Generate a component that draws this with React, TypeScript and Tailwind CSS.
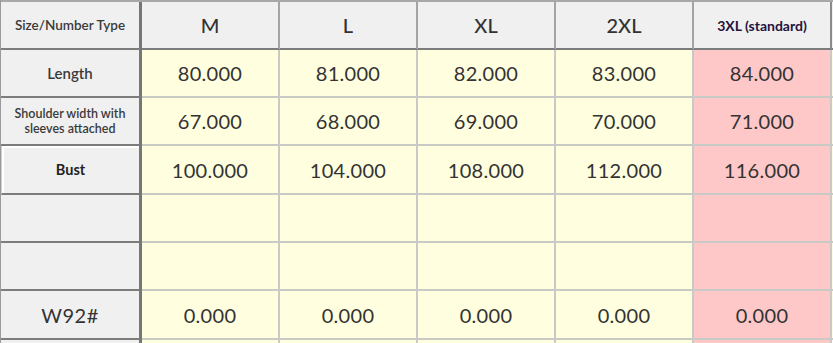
const sizes = ["M", "L", "XL", "2XL"];

const rows: { label: string; kind: "plain" | "small" | "bust" | "big" | "empty"; values: string[] }[] = [
  { label: "Length", kind: "plain", values: ["80.000", "81.000", "82.000", "83.000", "84.000"] },
  { label: "Shoulder width with sleeves attached", kind: "small", values: ["67.000", "68.000", "69.000", "70.000", "71.000"] },
  { label: "Bust", kind: "bust", values: ["100.000", "104.000", "108.000", "112.000", "116.000"] },
  { label: "", kind: "empty", values: ["", "", "", "", ""] },
  { label: "", kind: "empty", values: ["", "", "", "", ""] },
  { label: "W92#", kind: "big", values: ["0.000", "0.000", "0.000", "0.000", "0.000"] },
];

const heights = ["h-[48px]", "h-[48px]", "h-[49px]", "h-[48px]", "h-[48px]", "h-[49px]"];

function RowHead({ label, kind }: { label: string; kind: string }) {
  let cls = "text-[15px] font-semibold text-[#3a3a3a]";
  if (kind === "small") cls = "text-[12.5px] leading-[15px] font-semibold text-[#3a3a3a] px-1";
  if (kind === "bust") cls = "text-[14.5px] font-bold text-[#222]";
  if (kind === "big") cls = "text-[20px] tracking-[0.5px] text-[#333]";
  return (
    <div
      className={
        "w-[141px] shrink-0 flex items-center justify-center text-center bg-[#f0f0f0] border-r-[3px] border-b-2 border-r-[#767676] border-b-[#7c7c7c] " +
        (kind === "bust" ? "shadow-[inset_2px_2px_0_#ffffff] border-l border-l-[#d0d0d0]" : "")
      }
    >
      <span className={cls}>{label}</span>
    </div>
  );
}

export default function App() {
  return (
    <div className="w-[833px] h-[343px] overflow-hidden bg-white font-['Lato','Noto_Sans',sans-serif]">
      <div className="flex flex-col w-max border-l border-l-[#9a9a9a]">
        <div className="flex h-[50px] border-t-2 border-t-[#a8a8a8]">
          <div className="w-[141px] shrink-0 flex items-center justify-center bg-[#f0f0f0] border-r-[3px] border-b-2 border-r-[#767676] border-b-[#7c7c7c]">
            <span className="text-[13.5px] font-semibold text-[#3a3a3a]">Size/Number Type</span>
          </div>
          {sizes.map((s) => (
            <div
              key={s}
              className="w-[138px] shrink-0 flex items-center justify-center bg-[#f0f0f0] border-r-2 border-b-2 border-r-[#a4a4a4] border-b-[#7c7c7c]"
            >
              <span className="text-[20px] font-medium text-[#333]">{s}</span>
            </div>
          ))}
          <div className="w-[138px] shrink-0 flex items-center justify-center bg-[#f0f0f0] border-r-2 border-b-2 border-r-[#8a8a8a] border-b-[#7c7c7c]">
            <span className="text-[14px] font-bold text-[#24123f]">3XL (standard)</span>
          </div>
          <div className="w-[60px] shrink-0 bg-[#f0f0f0] border-b-2 border-b-[#7c7c7c]" />
        </div>
        {rows.map((r, i) => (
          <div key={i} className={"flex " + heights[i]}>
            <RowHead label={r.label} kind={r.kind} />
            {r.values.map((v, j) => (
              <div
                key={j}
                className={
                  "w-[138px] shrink-0 flex items-center justify-center border-r-2 border-b-2 border-[#c9c9c6] " +
                  (j === 4 ? "bg-[#ffc8c8]" : "bg-[#ffffe0]")
                }
              >
                <span className="text-[20px] tracking-[0.3px] text-[#333]">{v}</span>
              </div>
            ))}
            <div className="w-[60px] shrink-0 bg-[#fbfbe6] border-b-2 border-[#c9c9c6]" />
          </div>
        ))}
        <div className="flex h-[20px]">
          <div className="w-[141px] shrink-0 bg-[#f0f0f0] border-r-[3px] border-r-[#767676]" />
          {[0, 1, 2, 3, 4].map((j) => (
            <div
              key={j}
              className={"w-[138px] shrink-0 border-r-2 border-[#c9c9c6] " + (j === 4 ? "bg-[#ffc8c8]" : "bg-[#ffffe0]")}
            />
          ))}
        </div>
      </div>
    </div>
  );
}
